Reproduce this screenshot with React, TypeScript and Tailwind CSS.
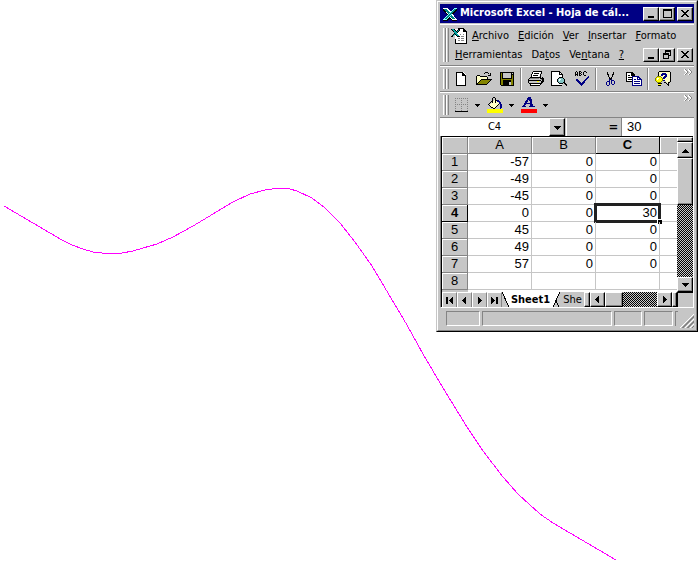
import React from "react";

const curve =
  "M4 206 L62 240 L72 245 L83 249 L93 252 L102 253 L122 253 L133 251 L143 248 L157 244 L173 237 L193 226 L213 214 L233 202 L250 194 L265 190 L280 188 L290 189 L297 191 L312 198 L325 208 L340 223 L355 242 L372 266 L388 293 L407 325 L423 354 L443 388 L467 427 L483 451 L503 477 L518 494 L540 514 L553 523 L616 560";

const rows = [
  ["-57", "0", "0"],
  ["-49", "0", "0"],
  ["-45", "0", "0"],
  ["0", "0", "30"],
  ["45", "0", "0"],
  ["49", "0", "0"],
  ["57", "0", "0"],
  ["", "", ""],
];

const raised =
  "bg-[#c6c6c6] border border-t-white border-l-white border-r-black border-b-black shadow-[inset_-1px_-1px_0_#848484] flex items-center justify-center shrink-0";

const Icon = ({
  children,
  size = 16,
}: {
  children: React.ReactNode;
  size?: number;
}) => (
  <svg
    width={size}
    height={size}
    viewBox={`0 0 ${size} ${size}`}
    shapeRendering="crispEdges"
    fill="none"
    stroke="none"
    className="shrink-0"
    aria-hidden="true"
  >
    {children}
  </svg>
);

const ExcelLogo = () => (
  <Icon>
    <path d="M1 2h5l3 4 3-4h3v2l-4 5 4 5v1h-5l-2-3-3 3H1v-2l4-4-4-5z" fill="#000" />
    <path d="M1 2h5l9 12h-5z" fill="#fff" />
    <path d="M2 3h3l8 10h-3z" fill="#008484" />
    <path d="M12 2h3L5 14H1z" fill="#84ffff" />
    <path d="M12 3h2L4 13H2z" fill="#008484" />
  </Icon>
);

const BookIcon = () => (
  <Icon>
    <path d="M4 1h8l3 3v11H4z" fill="#fff" />
    <path d="M7 0h5v1H7zM12 0h1v1h1v1h1v1h1v13H4v-5h1v4h10V4h-3V1h-1V0z" fill="#000" />
    <path d="M9 6h1v1H9zM12 6h1v1h-1zM7 8h2v1H7zM10 8h3v1h-3zM7 10h2v1H7zM10 10h3v1h-3zM7 12h2v1H7zM10 12h3v1h-3z" fill="#848484" />
    <path d="M0 1h4l1 2 2-2h2v1L6 5l3 4H6L4 6 2 9H0V8l3-3-3-3z" fill="#000" />
    <path d="M1 1h2l5 7H6zM7 2h1L2 8H1z" fill="#00a5a5" />
  </Icon>
);

const NewIcon = () => (
  <Icon>
    <path d="M3 1h7l3 3v10H3z" fill="#fff" />
    <path d="M3 1h7v1H4v12h8V5H9V2h2v1h1v1h1v11H3z" fill="#000" />
  </Icon>
);

const OpenIcon = () => (
  <Icon>
    <path d="M1 5h3v1h7v3H5l-4 4z" fill="#ffffc6" />
    <path d="M5 9h10l-4 4H1z" fill="#848400" />
    <path d="M1 4h3v1H1zM4 5h7v1H4zM0 5h1v9H0zM11 6h1v3h-1zM5 8h11v1h-1v1h-1v1h-1v1h-1v1h-1v1H0v-1h11v-1h1v-1h1v-1h1V9H5zM4 9h1v1H4zM3 10h1v1H3zM2 11h1v1H2zM1 12h1v1H1zM9 1h3v1H9zM8 2h1v1H8zM12 2h1v1h-1zM14 2h1v3h-3V4h2z" fill="#000" />
  </Icon>
);

const SaveIcon = () => (
  <Icon>
    <path d="M1 1h14v14H2l-1-1z" fill="#000" />
    <path d="M2 2h1v12H2zM3 8h1v6H3zM4 8h8v1H4zM12 8h1v6h-1zM13 4h1v10h-1z" fill="#848400" />
    <path d="M4 2h8v5H4zM13 2h1v1h-1zM10 11h2v3h-2z" fill="#c6c6c6" />
  </Icon>
);

const PrintIcon = () => (
  <Icon>
    <path d="M5 1h8l-2 6H3z" fill="#fff" />
    <path d="M1 8h12v5H1z" fill="#c6c6c6" />
    <path d="M5 0h9v1H5zM4 1h1v2H4zM3 3h1v3H3zM13 1h1v2h-1zM12 3h1v3h-1zM6 2h5v1H6zM5 4h5v1H5zM2 6h11v1H2zM1 7h1v1H1zM0 8h1v4H0zM1 9h12v1H1zM1 12h12v1H1zM2 13h1v2H2zM3 14h9v1H3zM12 12h1v2h-1zM13 7h2v1h-2zM12 7h1v1h-1zM14 6h1v6h-1zM15 7h1v4h-1zM13 10h1v3h-1z" fill="#000" />
    <path d="M3 13h9v1H3z" fill="#fff" />
    <path d="M9 10h2v1H9z" fill="#ffff00" />
    <path d="M13 8h1v1h-1zM2 7h9v1H2z" fill="#848484" />
  </Icon>
);

const PreviewIcon = () => (
  <Icon>
    <path d="M1 1h7l3 3v10H1z" fill="#fff" />
    <path d="M0 0h9v1H0zM0 1h1v13H0zM0 14h11v1H0zM9 1h1v1H9zM10 2h1v1h-1zM11 3h1v3h-1zM8 1h1v3H8zM9 3h2v1H9z" fill="#000" />
    <path d="M8 6h4v1H8zM7 7h1v1H7zM12 7h1v1h-1zM6 8h1v3H6zM13 8h1v3h-1zM7 11h1v1H7zM8 12h4v1H8zM12 11h2v1h-2zM13 12h2v1h-2zM14 13h2v2h-1v-1h-1z" fill="#000" />
    <path d="M8 7h4v1h1v3h-1v1H8v-1H7V8h1z" fill="#84c6c6" />
    <path d="M8 8h2v1H9v1H8z" fill="#fff" />
  </Icon>
);

const SpellIcon = () => (
  <Icon>
    <path d="M2 0h1v1H2zM1 1h1v4H1zM3 1h1v4H3zM2 3h1v1H2zM5 0h2v1H5zM5 1h1v4H5zM7 1h1v1H7zM6 2h1v1H6zM7 3h1v1H7zM6 4h1v1H6zM10 0h2v1h-2zM9 1h1v3H9zM10 4h2v1h-2zM12 1h1v1h-1z" fill="#000" />
    <path d="M2 8h2l3 4 7-7h1v1l-7 9H7L2 9z" fill="#000084" />
  </Icon>
);

const CutIcon = () => (
  <Icon>
    <path d="M4 1h1v3H4zM5 4h1v2H5zM6 6h1v2H6zM10 1h1v3h-1zM9 4h1v2H9zM8 6h1v2H8zM7 7h1v2H7zM5 3h1v1H5zM9 3h1v1H9z" fill="#000" />
    <path d="M6 8h1v2H6zM8 8h1v2H8zM9 9h2v1H9zM4 10h2v1H4zM3 11h1v3H3zM4 14h2v1H4zM6 10h1v4H6zM8 10h1v3H8zM11 10h1v3h-1zM9 13h2v1H9z" fill="#000084" />
  </Icon>
);

const CopyIcon = () => (
  <Icon>
    <path d="M0 1h6l3 3v7H0z" fill="#000" />
    <path d="M1 2h4v3h3v5H1z" fill="#fff" />
    <path d="M2 4h2v1H2zM2 6h5v1H2zM2 8h5v1H2z" fill="#000" />
    <path d="M6 5h6l4 4v6H6z" fill="#000084" />
    <path d="M7 6h4v3h4v5H7zM12 7l1 1h-1z" fill="#fff" />
    <path d="M8 8h2v1H8zM8 10h6v1H8zM8 12h6v1H8z" fill="#000084" />
  </Icon>
);

const HelpIcon = () => (
  <Icon>
    <path d="M4 1h11v9h-1v3h-1l-3-3H4z" fill="#ffffc6" />
    <path d="M4 0h11v1H4zM3 1h1v4H3zM15 1h1v10h-1zM9 11h2v1H9zM13 11h2v1h-2zM11 12h1v1h-1zM12 13h1v1h-1zM13 12h1v3h-1z" fill="#000" />
    <path d="M7 2h4v1h1v3h-1v1h-1v1H8V6h1V5h1V4H8v1H6V3h1zM8 9h2v1H8z" fill="#000084" />
    <path d="M2 5h4v1h1v1h1v3H7v1H6v1H2v-1H1v-1H0V7h1V6h1z" fill="#848400" />
    <path d="M2 6h4v1h1v3H6v1H2v-1H1V7h1z" fill="#ffff00" />
    <path d="M2 7h2v1H3v1H2z" fill="#fff" />
    <path d="M3 12h4v1H3zM3 14h3v1H3z" fill="#000" />
    <path d="M3 13h3v1H3z" fill="#ffff00" />
  </Icon>
);

const BordersIcon = () => (
  <Icon>
    <path d="M2 1.5h13M2 7.5h13M2.5 1v13M8.5 1v13M14.5 1v13" stroke="#848484" strokeDasharray="1 1" />
    <path d="M2 14h13v1H2z" fill="#000" />
  </Icon>
);

const BucketIcon = () => (
  <Icon>
    <path d="M0 12h16v4H0z" fill="#ffff00" />
    <path d="M7 3h1l5 4-5 4H6L2 8z" fill="#ffffc6" />
    <path d="M6 0h2v1H6zM5 1h1v5H5zM8 1h1v5H8zM4 4h1v1H4zM3 5h1v1H3zM2 6h1v1H2zM1 7h1v1H1zM2 8h1v1H2zM3 9h1v1H3zM4 10h2v1H4zM6 11h2v1H6zM8 10h1v1H8zM9 9h1v1H9zM10 8h1v1h-1zM11 7h1v1h-1zM9 3h1v1H9zM10 4h1v1h-1z" fill="#000" />
    <path d="M10 3h2v1h1v1h1v2h1v4h-1v1h-1V7h-1V5h-2z" fill="#000084" />
  </Icon>
);

const FontColorIcon = () => (
  <Icon>
    <path d="M7 0h3l2 9h2v1H8V9h1V7H5L4 9h1v1H1V9h1zM8 2L6 6h3z" fill="#000084" fillRule="evenodd" />
    <path d="M0 12h16v4H0z" fill="#ff0000" />
  </Icon>
);

const arrows = {
  left: "M5 0v7h-1v-1h-1v-1h-1v-1h-1v-1h1v-1h1v-1h1v-1z",
  right: "M2 0v7h1v-1h1v-1h1v-1h1v-1h-1v-1h-1v-1h-1v-1z",
  first: "M0 0h2v7H0zM7 0v7H6V6H5V5H4V4H3V3h1V2h1V1h1V0z",
  last: "M5 0h2v7H5zM0 0v7h1V6h1V5h1V4h1V3H3V2H2V1H1V0z",
  up: "M3 2h1v1h1v1h1v1h1v1H0V5h1V4h1V3h1z",
  down: "M0 2h7v1H6v1H5v1H4v1H3V5H2V4H1V3H0z",
  small: "M1 2h5v1H5v1H4v1H3V4H2V3H1z",
};

const Arrow = ({ dir }: { dir: keyof typeof arrows }) => (
  <Icon size={7}>
    <path d={arrows[dir]} fill="#000" />
  </Icon>
);

const Chevrons = () => (
  <svg width="8" height="7" viewBox="0 0 8 7" shapeRendering="crispEdges" fill="none" aria-hidden="true">
    <path d="M1 0h1v1h1v1h1v2H3v1H2v1H1V5h1V4h1V3H2V2H1zM5 0h1v1h1v1h1v2H7v1H6v1H5V5h1V4h1V3H6V2H5z" fill="#848484" />
    <path d="M0 0h1v1h1v1h1v2H2v1H1v1H0V5h1V4h1V3H1V2H0zM4 0h1v1h1v1h1v2H6v1H5v1H4V5h1V4h1V3H5V2H4z" fill="#fff" />
  </svg>
);

const Grip = () => (
  <div className="flex shrink-0 self-stretch py-[2px] pl-[3px]">
    <span className="w-[3px] border-l border-r border-l-white border-r-[#848484]" />
    <span className="w-[3px] border-l border-r border-l-white border-r-[#848484]" />
  </div>
);

const Divider = () => (
  <div className="flex w-[6px] shrink-0 justify-center self-stretch py-px">
    <span className="w-[2px] border-l border-r border-l-[#848484] border-r-white" />
  </div>
);

const ToolButton = ({
  label,
  children,
}: {
  label: string;
  children: React.ReactNode;
}) => (
  <button
    aria-label={label}
    className="flex w-[23px] h-[22px] shrink-0 items-center justify-center"
  >
    {children}
  </button>
);

const DropButton = ({ label }: { label: string }) => (
  <button
    aria-label={label}
    className="flex w-[11px] h-[22px] shrink-0 items-center justify-center"
  >
    <Arrow dir="small" />
  </button>
);

const WindowButtons = ({ child = false }: { child?: boolean }) => (
  <div className="flex shrink-0">
    <button aria-label="Minimizar" className={`${raised} w-4 h-[14px]`}>
      <Icon size={9}>
        <path d="M1 7h6v2H1z" fill="#000" />
      </Icon>
    </button>
    <button
      aria-label={child ? "Restaurar" : "Maximizar"}
      className={`${raised} w-4 h-[14px]`}
    >
      <Icon size={9}>
        {child ? (
          <path d="M2 0h6v6H6v3H0V3h2zM3 2v1h3v2h1V2zM1 5v3h4V5z" fill="#000" fillRule="evenodd" />
        ) : (
          <path d="M0 0h9v9H0zM1 2v6h7V2z" fill="#000" fillRule="evenodd" />
        )}
      </Icon>
    </button>
    <button aria-label="Cerrar" className={`${raised} ml-[2px] w-4 h-[14px]`}>
      <Icon size={9}>
        <path d="M0 1h2v1h1v1h2V2h1V1h2v1H7v1H6v1H5v1h1v1h1v1h1v1H6V7H5V6H3v1H2v1H0V7h1V6h1V5h1V4H2V3H1V2H0z" fill="#000" />
      </Icon>
    </button>
  </div>
);

const MenuItem = ({
  before = "",
  mnemonic,
  after = "",
}: {
  before?: string;
  mnemonic: string;
  after?: string;
}) => (
  <button className="px-1 leading-[19px] whitespace-nowrap">
    {before}
    <u className="underline-offset-1">{mnemonic}</u>
    {after}
  </button>
);

const TitleBar = () => (
  <header className="flex h-[19px] items-center bg-[#000084] pl-[2px] pr-px text-white">
    <ExcelLogo />
    <h1 className="min-w-0 flex-1 pl-[2px] text-[11px] font-bold whitespace-nowrap">
      Microsoft Excel - Hoja de cál...
    </h1>
    <WindowButtons />
  </header>
);

const MenuBar = () => (
  <nav className="mt-px flex border-t border-b border-t-white border-b-[#848484] py-px">
    <Grip />
    <div className="min-w-0 flex-1 pl-[2px]">
      <div className="flex items-center gap-px">
        <BookIcon />
        <MenuItem mnemonic="A" after="rchivo" />
        <MenuItem mnemonic="E" after="dición" />
        <MenuItem mnemonic="V" after="er" />
        <MenuItem mnemonic="I" after="nsertar" />
        <MenuItem mnemonic="F" after="ormato" />
      </div>
      <div className="flex items-center pr-px">
        <div className="flex flex-1 gap-px">
          <MenuItem mnemonic="H" after="erramientas" />
          <MenuItem before="Da" mnemonic="t" after="os" />
          <MenuItem before="Ve" mnemonic="n" after="tana" />
          <MenuItem mnemonic="?" />
        </div>
        <WindowButtons child />
      </div>
    </div>
  </nav>
);

const StandardToolbar = () => (
  <div className="flex h-[26px] items-center border-t border-b border-t-white border-b-[#848484]">
    <Grip />
    <ToolButton label="Nuevo"><NewIcon /></ToolButton>
    <ToolButton label="Abrir"><OpenIcon /></ToolButton>
    <ToolButton label="Guardar"><SaveIcon /></ToolButton>
    <Divider />
    <ToolButton label="Imprimir"><PrintIcon /></ToolButton>
    <ToolButton label="Vista preliminar"><PreviewIcon /></ToolButton>
    <ToolButton label="Ortografía"><SpellIcon /></ToolButton>
    <Divider />
    <ToolButton label="Cortar"><CutIcon /></ToolButton>
    <ToolButton label="Copiar"><CopyIcon /></ToolButton>
    <Divider />
    <ToolButton label="Ayuda"><HelpIcon /></ToolButton>
    <button aria-label="Más botones" className="ml-auto mr-[2px] self-start pt-[2px]">
      <Chevrons />
    </button>
  </div>
);

const FormatToolbar = () => (
  <div className="flex h-[25px] items-center border-t border-t-white">
    <Grip />
    <ToolButton label="Bordes"><BordersIcon /></ToolButton>
    <DropButton label="Tipos de borde" />
    <ToolButton label="Color de relleno"><BucketIcon /></ToolButton>
    <DropButton label="Colores de relleno" />
    <ToolButton label="Color de fuente"><FontColorIcon /></ToolButton>
    <DropButton label="Colores de fuente" />
    <button aria-label="Más botones" className="ml-auto mr-[2px] self-start pt-[2px]">
      <Chevrons />
    </button>
  </div>
);

const FormulaBar = () => (
  <div className="flex h-[19px] items-stretch border-t border-t-[#848484]">
    <input
      aria-label="Cuadro de nombres"
      defaultValue="C4"
      className="w-[109px] bg-white text-center text-[11px]"
    />
    <button aria-label="Nombres" className={`${raised} w-4`}>
      <Arrow dir="down" />
    </button>
    <div className="ml-px w-[40px] border-l border-l-white" />
    <label
      htmlFor="formula"
      className="w-[15px] text-center text-[13px] font-black leading-[17px]"
    >
      =
    </label>
    <input
      id="formula"
      defaultValue="30"
      className="min-w-0 flex-1 border-l border-l-[#848484] bg-white pl-[5px] font-['Liberation_Sans',Arial,sans-serif] text-[13px]"
    />
  </div>
);

const Sheet = () => (
  <table className="w-full table-fixed border-separate border-spacing-0 bg-white font-['Liberation_Sans',Arial,sans-serif] text-[13px] leading-4">
    <colgroup>
      <col className="w-[26px]" />
      <col className="w-16" />
      <col className="w-16" />
      <col className="w-16" />
      <col />
    </colgroup>
    <thead>
      <tr className="h-[17px] bg-[#c6c6c6]">
        <td className="border-r border-b border-[#848484] p-0 shadow-[inset_1px_1px_0_#fff]" />
        {["A", "B", "C"].map((name) => (
          <th
            key={name}
            scope="col"
            className={
              name === "C"
                ? "border-r border-b border-black p-0 font-bold shadow-[inset_1px_1px_0_#fff]"
                : "border-r border-b border-[#848484] p-0 font-normal shadow-[inset_1px_1px_0_#fff]"
            }
          >
            {name}
          </th>
        ))}
        <td className="border-b border-[#848484] p-0 shadow-[inset_1px_1px_0_#fff]" />
      </tr>
    </thead>
    <tbody>
      {rows.map((cells, row) => (
        <tr key={row} className="h-[17px]">
          <th
            scope="row"
            className={
              row === 3
                ? "border-r border-b border-black bg-[#c6c6c6] p-0 font-bold shadow-[inset_1px_1px_0_#fff]"
                : "border-r border-b border-[#848484] bg-[#c6c6c6] p-0 font-normal shadow-[inset_1px_1px_0_#fff]"
            }
          >
            {row + 1}
          </th>
          {cells.map((cell, col) => (
            <td
              key={col}
              className="relative border-r border-b border-[#c6c6c6] py-0 pl-0 pr-[2px] text-right"
            >
              {cell}
              {row === 3 && col === 2 && (
                <span className="absolute -top-[2px] -left-[2px] -right-[2px] -bottom-[2px] border-[3px] border-[#212121]">
                  <span className="absolute -right-1 -bottom-1 size-[5px] border-t border-l border-white bg-black" />
                </span>
              )}
            </td>
          ))}
          <td className="border-b border-[#c6c6c6] p-0" />
        </tr>
      ))}
    </tbody>
  </table>
);

const track =
  "bg-[repeating-conic-gradient(#000_0_25%,#c6c6c6_0_50%)] bg-[length:2px_2px]";

const VerticalScroll = () => (
  <div className={`flex w-4 shrink-0 flex-col ${track}`}>
    <div className={`${raised} h-[5px]`} />
    <button aria-label="Subir" className={`${raised} h-4`}>
      <Arrow dir="up" />
    </button>
    <div className={`${raised} h-[47px]`} />
    <button aria-label="Bajar" className={`${raised} mt-auto h-[15px]`}>
      <Arrow dir="down" />
    </button>
  </div>
);

const SheetTabs = () => (
  <div className="flex h-[15px] bg-[#c6c6c6]">
    {(["first", "left", "right", "last"] as const).map((dir) => (
      <button
        key={dir}
        aria-label={dir}
        className="flex w-[15px] shrink-0 items-center justify-center border-t border-l border-r border-t-white border-l-white border-r-[#848484]"
      >
        <Arrow dir={dir} />
      </button>
    ))}
    <svg width="8" height="15" viewBox="0 0 8 15" shapeRendering="crispEdges" className="shrink-0" aria-hidden="true">
      <path d="M0 0h8v15H7z" fill="#fff" />
      <path d="M0 0L7 15" stroke="#000" />
    </svg>
    <button className="w-[41px] shrink-0 bg-white text-[11px] font-bold leading-[15px]">
      Sheet1
    </button>
    <svg width="10" height="15" viewBox="0 0 10 15" shapeRendering="crispEdges" className="shrink-0" aria-hidden="true">
      <path d="M0 0h9L2 15H0z" fill="#fff" />
      <path d="M9 0L2 15M5 9l3 6" stroke="#000" fill="none" />
    </svg>
    <button className="w-[23px] shrink-0 overflow-hidden text-[11px] leading-[15px] whitespace-nowrap">
      She
    </button>
    <div className={`${raised} w-[6px]`} />
    <button aria-label="Izquierda" className={`${raised} w-[15px]`}>
      <Arrow dir="left" />
    </button>
    <div className={`flex min-w-0 flex-1 ${track}`}>
      <div className={`${raised} w-[18px]`} />
    </div>
    <button aria-label="Derecha" className={`${raised} w-[15px]`}>
      <Arrow dir="right" />
    </button>
    <div className={`${raised} w-[5px]`} />
    <div className="w-4 shrink-0 border-t border-l border-black" />
  </div>
);

const panel =
  "h-[15px] border border-t-[#848484] border-l-[#848484] border-r-white border-b-white";

const StatusBar = () => (
  <footer className="flex h-5 items-center gap-[2px] pl-[6px]">
    <div className={`${panel} w-[34px]`} />
    <div className={`${panel} flex-1`} />
    <div className={`${panel} w-[28px]`} />
    <div className={`${panel} w-[29px]`} />
    <div className={`${panel} w-[3px] border-r-0 border-b-0`} />
    <svg width="14" height="14" viewBox="0 0 14 14" fill="none" shapeRendering="crispEdges" className="shrink-0 self-end" aria-hidden="true">
      <path d="M0 14L14 0M5 14L14 5M10 14L14 10" stroke="#fff" />
      <path d="M2 14L14 2M3 14L14 3M7 14L14 7M8 14L14 8M12 14L14 12" stroke="#848484" />
    </svg>
  </footer>
);

const App = () => {
  return (
    <main className="relative min-h-screen overflow-hidden bg-white font-['DejaVu_Sans_Condensed','DejaVu_Sans',sans-serif] text-[11px] text-black">
      <svg
        viewBox="0 0 699 562"
        className="block w-full"
        fill="none"
        shapeRendering="crispEdges"
        role="img"
        aria-label="Curva"
      >
        <path d={curve} stroke="#ff00ff" />
      </svg>
      <section className="absolute top-0 right-px w-[262px] border border-t-[#c6c6c6] border-l-[#c6c6c6] border-r-black border-b-black bg-[#c6c6c6]">
        <div className="border border-t-white border-l-white border-r-[#848484] border-b-[#848484] p-[2px]">
          <TitleBar />
          <MenuBar />
          <StandardToolbar />
          <FormatToolbar />
          <FormulaBar />
          <div className="border-l border-r border-b border-l-[#848484] border-r-white border-b-white">
            <div className="flex border-t border-l border-black">
              <div className="min-w-0 flex-1 bg-white">
                <Sheet />
                <div className="h-[2px] w-[26px] bg-[#c6c6c6]" />
              </div>
              <VerticalScroll />
            </div>
            <div className="border-l border-black">
              <SheetTabs />
            </div>
          </div>
          <StatusBar />
        </div>
      </section>
    </main>
  );
};

export default App;
